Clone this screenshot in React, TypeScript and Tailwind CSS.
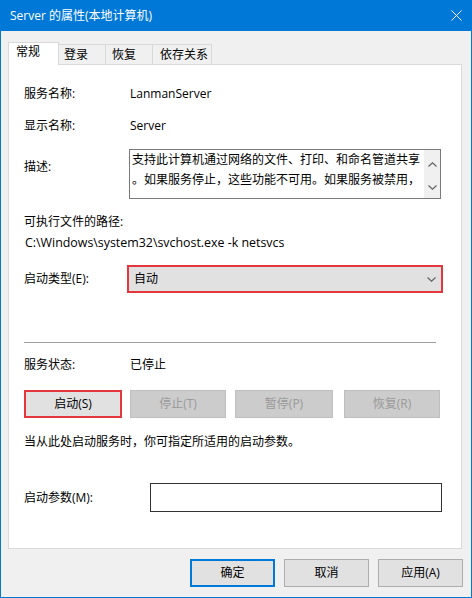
import React from 'react';

const font = "font-['Open_Sans','Noto_Sans_CJK_SC',sans-serif]";

const Chevron: React.FC<{ up?: boolean; className?: string }> = ({ up, className }) => (
  <svg width="9" height="5" viewBox="0 0 9 5" className={className}>
    <path
      d={up ? 'M0.5 4.5 L4.5 0.8 L8.5 4.5' : 'M0.5 0.5 L4.5 4.2 L8.5 0.5'}
      fill="none"
      stroke="#606060"
      strokeWidth="1.1"
    />
  </svg>
);

const App: React.FC = () => {
  const tabs = [
    { label: '登录', w: 'w-[47px] pl-[5px]' },
    { label: '恢复', w: 'w-[47px] pl-[6px]' },
    { label: '依存关系', w: 'w-[59px] pl-[7px]' },
  ];

  return (
    <div className={`w-[472px] h-[598px] flex flex-col bg-[#0078d7] text-[12px] text-black ${font}`}>
      {/* Title bar */}
      <div className="h-[31px] flex items-center justify-between pl-[10px] pr-[10px] text-white">
        <span className="leading-[20px]">Server 的属性(本地计算机)</span>
        <svg width="11" height="11" viewBox="0 0 11 11">
          <path d="M0.5 0.5 L10.5 10.5 M10.5 0.5 L0.5 10.5" stroke="#fff" strokeWidth="1" />
        </svg>
      </div>

      {/* Body */}
      <div className="flex-1 mx-[1px] mb-[1px] bg-[#f0f0f0] flex flex-col pl-[7px] pr-[8px] pt-[11px]">
        {/* Tabs */}
        <div className="flex items-end h-[22px]">
          <div className="relative z-10 w-[51px] h-[23px] -mb-[1px] bg-white border-t border-x border-[#d9d9d9] pl-[7px] leading-[18px]">
            常规
          </div>
          {tabs.map((t) => (
            <div
              key={t.label}
              className={`${t.w} h-[20px] border-t border-r border-[#d9d9d9] leading-[18px] pt-[1px]`}
            >
              {t.label}
            </div>
          ))}
        </div>

        {/* Panel */}
        <div className="w-[454px] h-[485px] border border-[#d9d9d9] bg-white flex flex-col pl-[15px]">
          <div className="mt-[19px] h-[20px] leading-[20px] flex">
            <span className="w-[106px]">服务名称:</span>
            <span>LanmanServer</span>
          </div>
          <div className="mt-[12px] h-[20px] leading-[20px] flex">
            <span className="w-[106px]">显示名称:</span>
            <span>Server</span>
          </div>

          {/* Description */}
          <div className="mt-[13px] flex items-start">
            <span className="w-[105px] pt-[8px] leading-[20px]">描述:</span>
            <div className="w-[312px] h-[50px] border border-[#7a7a7a] flex">
              <div className="flex-1 pl-[2px] leading-[20px] whitespace-nowrap overflow-hidden">
                <div>支持此计算机通过网络的文件、打印、和命名管道共享</div>
                <div>。如果服务停止，这些功能不可用。如果服务被禁用，</div>
              </div>
              <div className="w-[16px] bg-[#f0f0f0] flex flex-col items-center justify-between pt-[12px] pb-[8px]">
                <Chevron up />
                <Chevron />
              </div>
            </div>
          </div>

          <div className="mt-[13px] h-[20px] leading-[20px]">可执行文件的路径:</div>
          <div className="mt-[1px] h-[20px] leading-[20px] ml-[1px] text-[12.4px]">
            C:\Windows\system32\svchost.exe -k netsvcs
          </div>

          {/* Startup type */}
          <div className="mt-[12px] h-[28px] flex items-center">
            <span className="w-[103px] leading-[20px]">启动类型(E):</span>
            <div className="w-[316px] h-[28px] border-2 border-[#e3363d] bg-[#e1e1e1] flex items-center justify-between pl-[5px] pr-[5px] leading-[20px]">
              <span>自动</span>
              <Chevron />
            </div>
          </div>

          <div className="mt-[49px] w-[412px] h-px bg-[#a0a0a0]" />

          <div className="mt-[12px] h-[20px] leading-[20px] flex">
            <span className="w-[106px]">服务状态:</span>
            <span>已停止</span>
          </div>

          {/* Service buttons */}
          <div className="mt-[15px] h-[28px] flex">
            <div className="w-[98px] h-[28px] border-2 border-[#e3363d] bg-[#e1e1e1] flex items-center justify-center leading-[20px]">
              启动(S)
            </div>
            <div className="ml-[8px] w-[96px] h-[28px] border border-[#bfbfbf] bg-[#cccccc] text-[#9a9a9a] flex items-center justify-center leading-[20px]">
              停止(T)
            </div>
            <div className="ml-[9px] w-[98px] h-[28px] border border-[#bfbfbf] bg-[#cccccc] text-[#9a9a9a] flex items-center justify-center leading-[20px]">
              暂停(P)
            </div>
            <div className="ml-[11px] w-[96px] h-[28px] border border-[#bfbfbf] bg-[#cccccc] text-[#9a9a9a] flex items-center justify-center leading-[20px]">
              恢复(R)
            </div>
          </div>

          <div className="mt-[14px] h-[20px] leading-[20px]">当从此处启动服务时，你可指定所适用的启动参数。</div>

          <div className="mt-[31px] h-[29px] flex items-center">
            <span className="w-[126px] leading-[20px]">启动参数(M):</span>
            <div className="w-[292px] h-[29px] border border-[#333333] bg-white" />
          </div>
        </div>

        {/* Dialog buttons */}
        <div className="mt-[10px] flex justify-end gap-[9px]">
          <div className="w-[85px] h-[28px] border-2 border-[#0078d7] bg-[#e1e1e1] flex items-center justify-center leading-[20px]">
            确定
          </div>
          <div className="w-[85px] h-[28px] border border-[#adadad] bg-[#e1e1e1] flex items-center justify-center leading-[20px]">
            取消
          </div>
          <div className="w-[85px] h-[28px] border border-[#adadad] bg-[#e1e1e1] flex items-center justify-center leading-[20px]">
            应用(A)
          </div>
        </div>
      </div>
    </div>
  );
};

export default App;
